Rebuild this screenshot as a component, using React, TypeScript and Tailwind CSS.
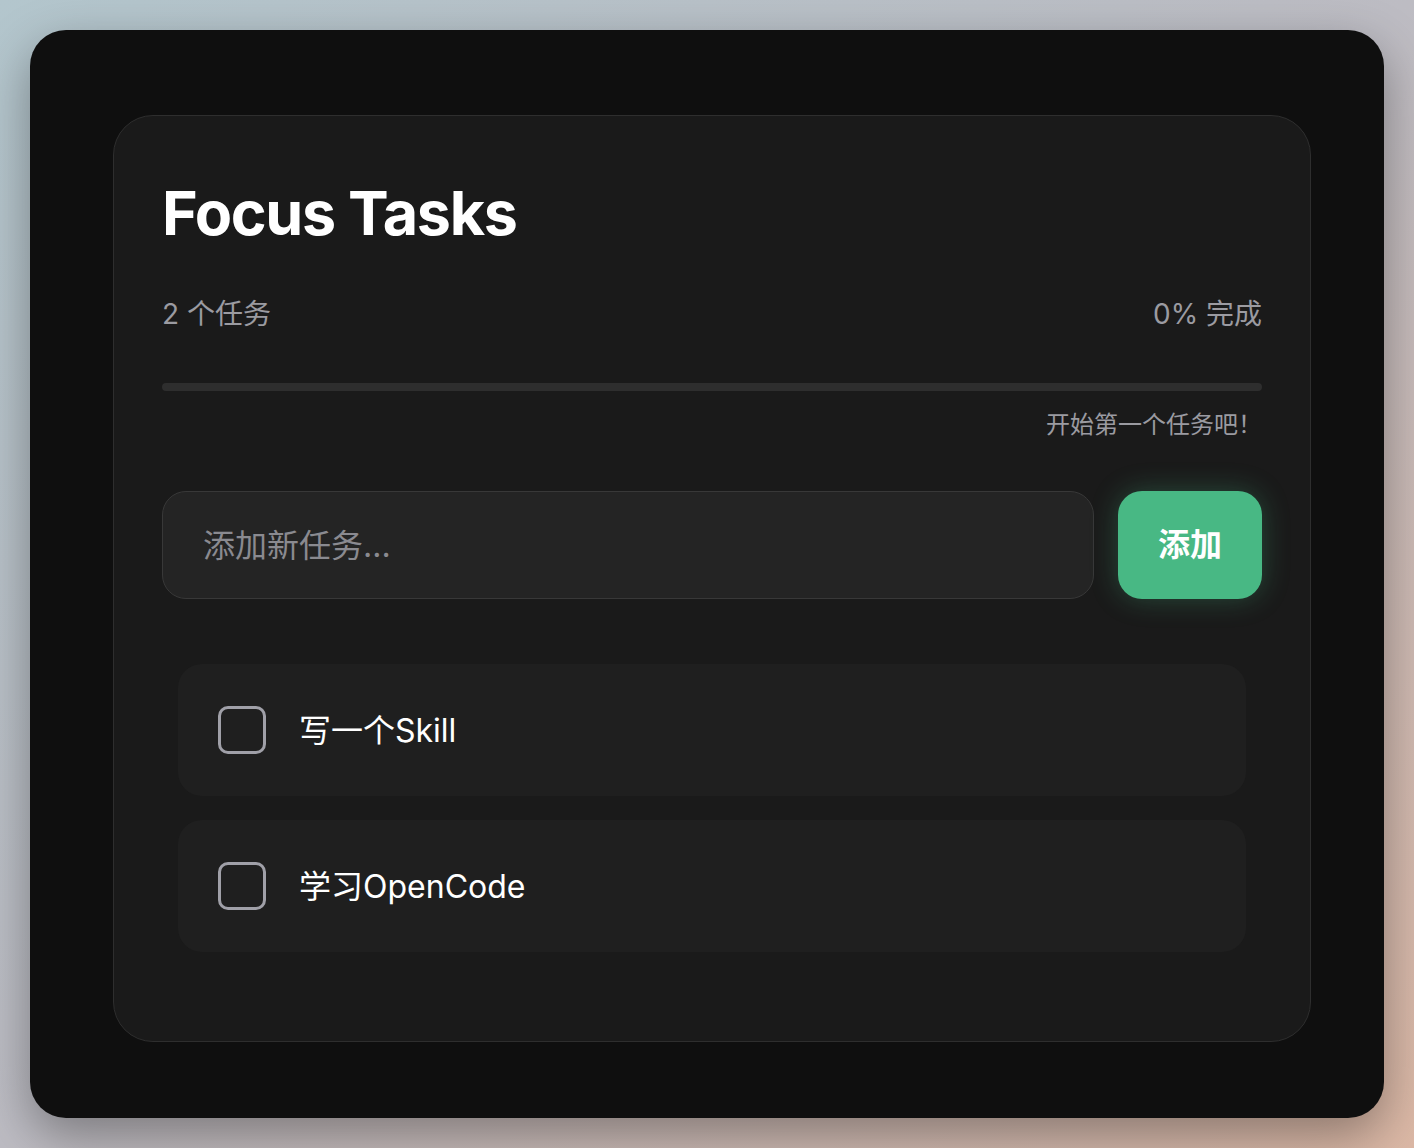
import { useState } from "react";

type Task = { id: number; text: string; done: boolean };

export default function App() {
  const [tasks, setTasks] = useState<Task[]>([
    { id: 1, text: "写一个Skill", done: false },
    { id: 2, text: "学习OpenCode", done: false },
  ]);
  const [draft, setDraft] = useState("");

  const doneCount = tasks.filter((t) => t.done).length;
  const percent = tasks.length ? Math.round((doneCount / tasks.length) * 100) : 0;

  const addTask = () => {
    if (!draft.trim()) return;
    setTasks([...tasks, { id: Date.now(), text: draft.trim(), done: false }]);
    setDraft("");
  };

  const toggle = (id: number) => {
    setTasks(tasks.map((t) => (t.id === id ? { ...t, done: !t.done } : t)));
  };

  return (
    <div className="min-h-screen w-full bg-gradient-to-br from-[#b3c6cd] via-[#bdbcc3] to-[#dcb8a5] p-[30px] font-['Inter','Noto_Sans_CJK_SC',sans-serif]">
      <div className="flex h-[1088px] rounded-[36px] bg-[#0f0f0f] pl-[83px] pt-[85px] shadow-[0_18px_50px_rgba(0,0,0,0.35)]">
        <div className="h-[927px] w-[1198px] rounded-[40px] border border-[#2e2e2e] bg-[#1a1a1a] px-12 pt-[67px]">
          <h1 className="text-[61px] leading-none font-bold tracking-[-0.022em] text-white">Focus Tasks</h1>

          {/* stats */}
          <div className="mt-[56px] flex items-center justify-between text-[28px] leading-none text-[#9b9ba1]">
            <span>{tasks.length} 个任务</span>
            <span>{percent}% 完成</span>
          </div>

          <div className="mt-[55px] h-2 w-full rounded-full bg-[#2e2e2e]">
            <div className="h-2 rounded-full bg-[#48b884]" style={{ width: `${percent}%` }} />
          </div>

          <p className="mt-[22px] text-right text-[24px] leading-none text-[#9b9ba1]">开始第一个任务吧！</p>

          {/* input */}
          <div className="mt-[54px] flex gap-6">
            <input
              value={draft}
              onChange={(e) => setDraft(e.target.value)}
              onKeyDown={(e) => e.key === "Enter" && addTask()}
              placeholder="添加新任务..."
              className="h-[108px] flex-1 rounded-[24px] border border-[#383838] bg-[#242424] px-10 text-[32px] text-white outline-none placeholder:text-[#8a8a90]"
            />
            <button
              onClick={addTask}
              className="h-[108px] w-[144px] rounded-[24px] bg-[#48b884] text-[32px] font-bold text-white shadow-[0_0_28px_rgba(72,184,132,0.3)]"
            >
              添加
            </button>
          </div>

          {/* tasks */}
          <div className="mt-[65px] flex flex-col gap-6 px-4">
            {tasks.map((t) => (
              <div
                key={t.id}
                onClick={() => toggle(t.id)}
                className="flex h-[132px] cursor-pointer items-center rounded-[24px] bg-[#1f1f1f] px-10"
              >
                <div
                  className={
                    t.done
                      ? "h-12 w-12 shrink-0 rounded-[10px] border-[3px] border-[#48b884] bg-[#48b884]"
                      : "h-12 w-12 shrink-0 rounded-[10px] border-[3px] border-[#a0a0a8]"
                  }
                />
                <span
                  className={
                    t.done
                      ? "ml-[33px] mt-[2px] text-[32px] text-[#777] line-through"
                      : "ml-[33px] mt-[2px] text-[32px] text-white"
                  }
                >
                  {t.text}
                </span>
              </div>
            ))}
          </div>
        </div>
      </div>
    </div>
  );
}
